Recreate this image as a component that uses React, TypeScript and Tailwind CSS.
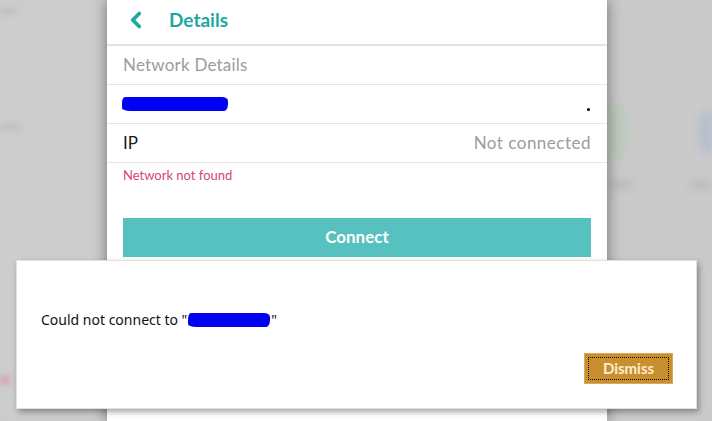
import { ChevronLeft } from "lucide-react";

const panelFont = { fontFamily: '"Lato", "Open Sans", sans-serif' };
const dialogFont = { fontFamily: '"Noto Sans", "Open Sans", sans-serif' };

function Redacted({ className }: { className: string }) {
  return (
    <span
      className={`inline-block bg-[#0000f5] rounded-[3px_6px_4px_8px/6px_4px_7px_3px] align-middle ${className}`}
    ></span>
  );
}

function Row({ children }: { children: React.ReactNode }) {
  return (
    <div className="h-[39px] border-b border-[#e6e6e6] px-4 flex items-center justify-between">
      {children}
    </div>
  );
}

export default function App() {
  return (
    <div className="relative w-[712px] h-[421px] overflow-hidden bg-[#c9cac9] flex">
      {/* blurred app behind the panel */}
      <div className="w-[107px] shrink-0 flex flex-col blur-[3px] bg-[#cdcdcd]">
        <div className="h-[6px] w-[18px] mt-[8px] bg-[#bdbdbd] rounded"></div>
        <div className="h-[6px] w-[22px] mt-[110px] bg-[#bdbdbd] rounded"></div>
        <div className="h-[8px] w-[10px] mt-[246px] bg-[#d89aa8] rounded"></div>
      </div>

      <main
        style={panelFont}
        className="w-[500px] shrink-0 bg-white flex flex-col z-10 shadow-[0_0_14px_rgba(0,0,0,0.45)]"
      >
        <header className="h-[46px] shrink-0 border-b-2 border-[#e4e4e4] flex items-center pl-[16px] pb-[4px]">
          <ChevronLeft className="w-[26px] h-[26px] text-[#1ea8a3]" strokeWidth={3.5} />
          <h1 className="ml-[20px] text-[19px] font-bold text-[#1ea8a3] leading-none pb-[2px]">
            Details
          </h1>
        </header>

        <Row>
          <span className="text-[17px] tracking-[0.2px] text-[#9c9c9c]">Network Details</span>
        </Row>
        <Row>
          <Redacted className="w-[106px] h-[14px] -ml-[1px]" />
          <span className="w-[3px] h-[3px] rounded-full bg-black mt-[10px] mr-[1px]"></span>
        </Row>
        <Row>
          <span className="text-[17px] text-[#1a1a1a]">IP</span>
          <span className="text-[17px] tracking-[0.5px] text-[#9c9c9c]">Not connected</span>
        </Row>

        <p className="px-4 pt-[3px] text-[13px] text-[#d7457a]">Network not found</p>

        <div className="px-4 mt-[32px]">
          <button className="w-full h-[39px] bg-[#56c1be] text-white text-[17px] font-bold">
            Connect
          </button>
        </div>
      </main>

      <div className="flex-1 flex flex-col blur-[4px]">
        <div className="flex justify-between mt-[104px]">
          <div className="w-[18px] h-[56px] bg-[#bccabc] rounded-r-[6px]"></div>
          <div className="w-[12px] h-[44px] mt-[6px] bg-[#b2bdd0] rounded-l-full"></div>
        </div>
        <div className="flex justify-between mt-[22px]">
          <div className="w-[26px] h-[5px] bg-[#b2b2b2] rounded"></div>
          <div className="w-[22px] h-[5px] bg-[#b2b2b2] rounded"></div>
        </div>
      </div>

      {/* error dialog */}
      <div
        style={dialogFont}
        className="absolute z-20 left-[16px] top-[260px] w-[681px] h-[149px] bg-white border border-[#e7dfcf] shadow-[2px_3px_6px_rgba(0,0,0,0.35)] flex flex-col px-6"
      >
        <p className="mt-[48px] text-[14px] text-[#111] flex items-center">
          Could not connect to "
          <Redacted className="w-[82px] h-[14px] mx-[1px]" />"
        </p>
        <div className="flex justify-end mt-auto mb-[24px] -mr-[1px]">
          <button
            style={panelFont}
            className="w-[89px] h-[31px] bg-[#c98f2e] p-[3px] border border-[#d9a85a]"
          >
            <span className="w-full h-full flex items-center justify-center border border-dotted border-black text-[15px] font-bold text-[#fdebd3]">
              Dismiss
            </span>
          </button>
        </div>
      </div>
    </div>
  );
}
